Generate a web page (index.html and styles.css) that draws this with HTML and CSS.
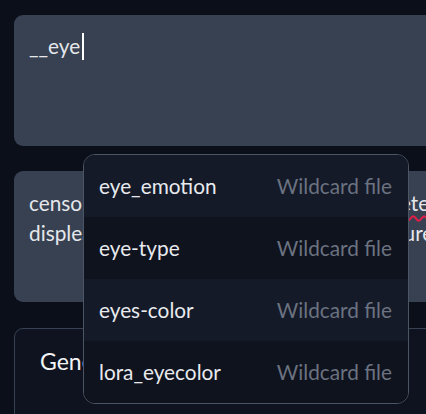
FILE: index.html
```html
<!DOCTYPE html>
<html>
<head>
<meta charset="utf-8">
<link rel="stylesheet" href="styles.css">
</head>
<body>
<div class="page">
  <div class="field prompt">
    <div class="text">__eye<span class="caret"></span></div>
  </div>
  <div class="field negative">
    <div class="line">censored, bad anatomy, extra fingers, <span class="typo">ameteur</span>, blurry</div>
    <div class="line">displeasing, worst quality, bad jpeg signature, bad</div>
  </div>
  <div class="panel">
    <div class="panel-title">Generation</div>
  </div>
  <ul class="dropdown">
    <li class="item odd"><span class="name">eye_emotion</span><span class="kind">Wildcard file</span></li>
    <li class="item even"><span class="name">eye-type</span><span class="kind">Wildcard file</span></li>
    <li class="item odd"><span class="name">eyes-color</span><span class="kind">Wildcard file</span></li>
    <li class="item even"><span class="name">lora_eyecolor</span><span class="kind">Wildcard file</span></li>
  </ul>
</div>
</body>
</html>
```
FILE: styles.css
```css
html, body {
  margin: 0;
  padding: 0;
  background: #0b0f19;
  overflow: hidden;
  width: 426px;
  height: 414px;
}
body {
  font-family: "Lato", "Noto Sans", sans-serif;
  color: #e5e7eb;
}
.page {
  position: relative;
  padding: 15px 0 0 14px;
  display: flex;
  flex-direction: column;
}
.field {
  width: 440px;
  height: 131px;
  box-sizing: border-box;
  background: #374151;
  border-radius: 9px;
  padding: 16px 15px;
  font-size: 20.8px;
}
.prompt .text {
  line-height: 30px;
  display: flex;
  align-items: center;
}
.caret {
  display: inline-block;
  width: 2px;
  height: 27px;
  background: #ffffff;
  margin-left: 2px;
}
.negative {
  margin-top: 25px;
  padding-top: 17px;
  overflow: hidden;
}
.negative .line {
  line-height: 30px;
  white-space: nowrap;
}
.typo {
  text-decoration: underline wavy #e11d48;
  text-underline-offset: 4px;
}
.panel {
  margin-top: 26px;
  width: 440px;
  height: 120px;
  box-sizing: border-box;
  border: 1px solid #374151;
  border-radius: 9px;
  background: #0f1320;
  padding: 18px 25px;
}
.panel-title {
  font-size: 23px;
  color: #f3f4f6;
}
.dropdown {
  position: absolute;
  left: 83px;
  top: 154px;
  width: 326px;
  margin: 0;
  padding: 0;
  list-style: none;
  border: 1px solid #4b5563;
  border-radius: 12px;
  overflow: hidden;
  box-sizing: border-box;
  background: #0f131e;
}
.item {
  height: 62px;
  box-sizing: border-box;
  display: flex;
  align-items: center;
  justify-content: space-between;
  padding: 0 16px 2px 15px;
  font-size: 20.8px;
}
.item.odd { background: #141a28; }
.item.even { background: #0f131e; }
.name { color: #e8eaee; }
.kind { color: #6b7280; }
```
